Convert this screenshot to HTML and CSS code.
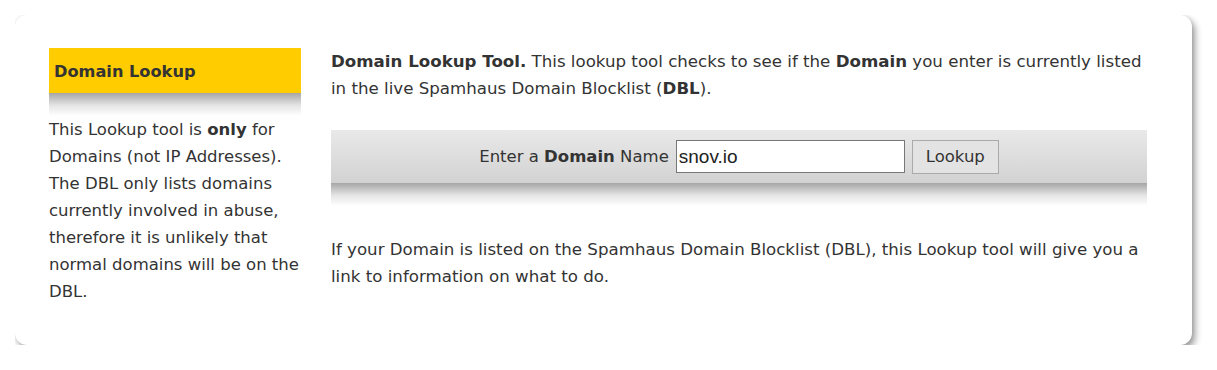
FILE: index.html
```html
<!DOCTYPE html>
<html lang="en">
<head>
  <meta charset="UTF-8">
  <title>Domain Lookup</title>
  <link rel="stylesheet" href="styles.css">
</head>
<body>
  <div class="card">
    <aside class="side">
      <h3 class="side-title">Domain Lookup</h3>
      <div class="drop-shadow"></div>
      <p>This Lookup tool is <b>only</b> for Domains (not IP Addresses). The DBL only lists domains currently involved in abuse, therefore it is unlikely that normal domains will be on the DBL.</p>
    </aside>

    <main class="content">
      <p><b>Domain Lookup Tool.</b> This lookup tool checks to see if the <b>Domain</b> you enter is currently listed in the live Spamhaus Domain Blocklist (<b>DBL</b>).</p>

      <form class="lookup-bar">
        <label for="domain">Enter a <b>Domain</b> Name</label>
        <input type="text" id="domain" name="domain" value="snov.io">
        <button type="submit">Lookup</button>
      </form>
      <div class="drop-shadow"></div>

      <p class="note">If your Domain is listed on the Spamhaus Domain Blocklist (DBL), this Lookup tool will give you a link to information on what to do.</p>
    </main>
  </div>
</body>
</html>
```

FILE: styles.css
```css
body {
  margin: 15px;
  background: #fff;
  font-family: "DejaVu Sans", Verdana, sans-serif;
  font-size: 16.5px;
  line-height: 27px;
  color: #333;
}

.card {
  display: flex;
  gap: 30px;
  width: 1177px;
  height: 330px;
  box-sizing: border-box;
  padding: 33px 45px 0 34px;
  background: #fff;
  border-radius: 12px;
  box-shadow: 3px 4px 7px rgba(0, 0, 0, 0.4), 0 0 4px rgba(0, 0, 0, 0.08);
}

.side {
  width: 252px;
  flex: none;
}

.side-title {
  margin: 0;
  height: 45px;
  padding: 0 6px 0 5px;
  background: #ffcc00;
  font-size: 16.2px;
  line-height: 47px;
  color: #333;
}

.side p {
  margin: 0;
}

.drop-shadow {
  height: 23px;
  background: linear-gradient(#a6a6a6, #e6e6e6 55%, #fff);
}

.content {
  flex: 1;
  font-size: 16.65px;
}

.content p {
  margin: 0;
}

.lookup-bar {
  display: flex;
  justify-content: center;
  align-items: center;
  gap: 6px;
  height: 53px;
  margin-top: 28px;
  background: linear-gradient(#e9e9e9, #d2d2d2);
  font-size: 16.5px;
}

.lookup-bar label {
  margin-right: 1px;
}

.lookup-bar input {
  width: 229px;
  height: 33px;
  box-sizing: border-box;
  padding: 0 2px;
  border: 1px solid #777;
  font-family: "Liberation Sans", Arial, sans-serif;
  font-size: 19px;
  color: #222;
}

.lookup-bar button {
  height: 34px;
  width: 87px;
  margin-left: 1px;
  border: 1px solid #aaa;
  background: #e3e3e3;
  font-family: "DejaVu Sans", Verdana, sans-serif;
  font-size: 16.5px;
  color: #333;
}

.content .note {
  margin-top: 30px;
}
```
